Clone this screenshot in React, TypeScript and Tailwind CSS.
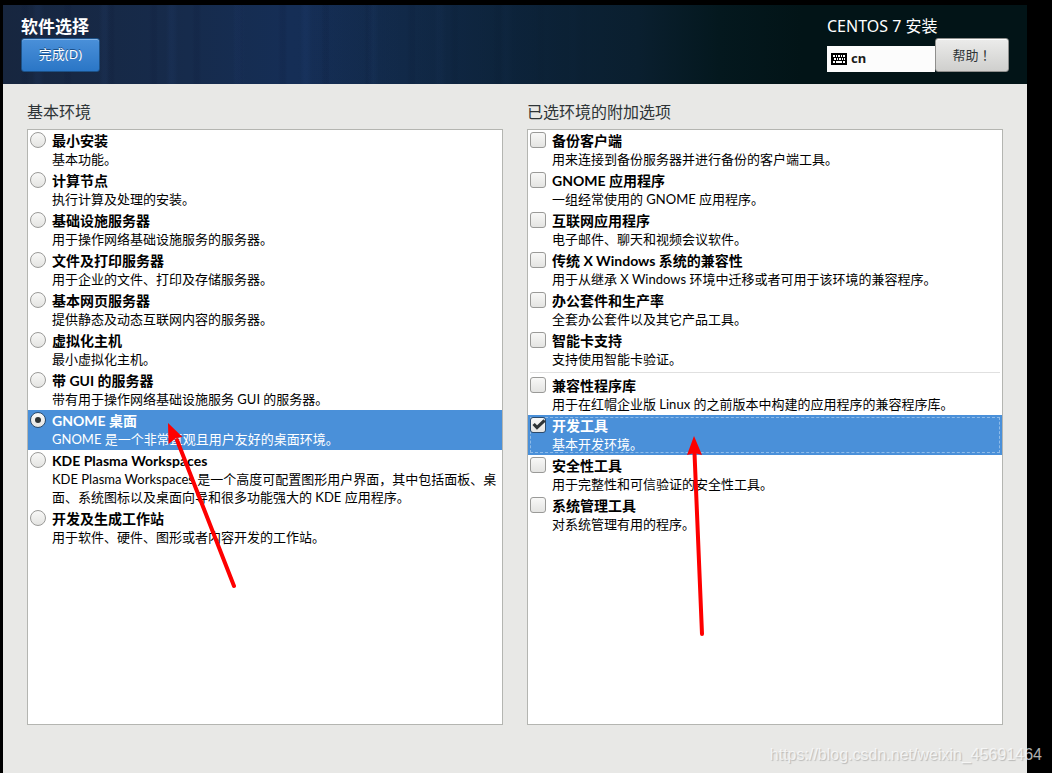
import React, { useState } from 'react';

interface Option {
  id: string;
  title: string;
  description: string;
}

const environments: Option[] = [
  { id: 'minimal', title: '最小安装', description: '基本功能。' },
  { id: 'compute', title: '计算节点', description: '执行计算及处理的安装。' },
  { id: 'infra', title: '基础设施服务器', description: '用于操作网络基础设施服务的服务器。' },
  { id: 'file', title: '文件及打印服务器', description: '用于企业的文件、打印及存储服务器。' },
  { id: 'web', title: '基本网页服务器', description: '提供静态及动态互联网内容的服务器。' },
  { id: 'virt', title: '虚拟化主机', description: '最小虚拟化主机。' },
  { id: 'gui', title: '带 GUI 的服务器', description: '带有用于操作网络基础设施服务 GUI 的服务器。' },
  { id: 'gnome', title: 'GNOME 桌面', description: 'GNOME 是一个非常直观且用户友好的桌面环境。' },
  {
    id: 'kde',
    title: 'KDE Plasma Workspaces',
    description: 'KDE Plasma Workspaces 是一个高度可配置图形用户界面，其中包括面板、桌面、系统图标以及桌面向导和很多功能强大的 KDE 应用程序。',
  },
  { id: 'dev', title: '开发及生成工作站', description: '用于软件、硬件、图形或者内容开发的工作站。' },
];

const environmentAddons: Option[] = [
  { id: 'backup', title: '备份客户端', description: '用来连接到备份服务器并进行备份的客户端工具。' },
  { id: 'gnome-apps', title: 'GNOME 应用程序', description: '一组经常使用的 GNOME 应用程序。' },
  { id: 'internet-apps', title: '互联网应用程序', description: '电子邮件、聊天和视频会议软件。' },
  { id: 'legacy-x', title: '传统 X Windows 系统的兼容性', description: '用于从继承 X Windows 环境中迁移或者可用于该环境的兼容程序。' },
  { id: 'office', title: '办公套件和生产率', description: '全套办公套件以及其它产品工具。' },
  { id: 'smart-card', title: '智能卡支持', description: '支持使用智能卡验证。' },
];

const commonAddons: Option[] = [
  { id: 'compat', title: '兼容性程序库', description: '用于在红帽企业版 Linux 的之前版本中构建的应用程序的兼容程序库。' },
  { id: 'devtools', title: '开发工具', description: '基本开发环境。' },
  { id: 'security', title: '安全性工具', description: '用于完整性和可信验证的安全性工具。' },
  { id: 'admin', title: '系统管理工具', description: '对系统管理有用的程序。' },
];

interface OptionRowProps {
  option: Option;
  type: 'radio' | 'checkbox';
  checked: boolean;
  focused?: boolean;
  onChange: () => void;
}

function OptionRow({ option, type, checked, focused, onChange }: OptionRowProps) {
  return (
    <label
      className={`flex gap-1.5 px-0.5 py-0.5 ${checked ? 'bg-[#4a90d9] text-white' : 'text-black'} ${
        focused ? 'outline-1 outline-dashed -outline-offset-3 outline-[#8fbbe8]' : ''
      }`}
    >
      <span className="relative size-4 shrink-0">
        <input
          type={type}
          name={type === 'radio' ? 'environment' : option.id}
          checked={checked}
          onChange={onChange}
          className={`block size-4 appearance-none border bg-linear-to-b from-[#f8f8f7] to-[#e4e4e2] outline-none ${
            type === 'radio' ? 'rounded-full' : 'rounded-[3px]'
          } ${checked ? 'border-[#2b4a6b]' : 'border-[#9a9a98]'}`}
        />
        {checked && type === 'radio' && (
          <span className="pointer-events-none absolute inset-[5px] rounded-full bg-[#2e3436]" />
        )}
        {checked && type === 'checkbox' && (
          <svg viewBox="0 0 16 16" className="pointer-events-none absolute inset-0 size-4" fill="none">
            <path d="M3.6 7 L7 10.6 L14.6 3.4" stroke="#2e3436" strokeWidth="3.2" />
          </svg>
        )}
      </span>
      <span className="flex flex-col font-['Lato','Noto_Sans_CJK_SC',sans-serif]">
        <span className="text-[14px] leading-[18px] font-bold">{option.title}</span>
        <span className="text-[13px] leading-[18px]">{option.description}</span>
      </span>
    </label>
  );
}

function KeyboardIcon() {
  return (
    <svg viewBox="0 0 16 12" className="h-3 w-4" shapeRendering="crispEdges">
      <rect width="16" height="12" rx="1" fill="#000" />
      <path
        d="M2 2h2v2h-2z M5 2h1v2h-1z M7 2h2v2h-2z M10 2h1v2h-1z M12 2h2v2h-2z M3 5h2v2h-2z M6 5h1v2h-1z M8 5h2v2h-2z M11 5h1v2h-1z M13 5h1v2h-1z M2 8h2v2h-2z M5 8h6v2h-6z M12 8h2v2h-2z"
        fill="#fff"
      />
    </svg>
  );
}

function Header() {
  return (
    <header className="flex justify-between bg-[linear-gradient(90deg,transparent_30%,#0a1f2f_62%,#04181e_70%,#021417_78%),repeating-linear-gradient(90deg,transparent_0_29px,rgba(50,90,160,0.08)_33px_36px,transparent_41px_67px),repeating-linear-gradient(90deg,transparent_0_17px,rgba(10,20,50,0.12)_20px_24px,transparent_26px_43px),linear-gradient(90deg,#17263f_0%,#162b4c_18%,#152e56_28%,#142d52_40%,#10284a_55%)] px-[18px] pt-2.5 pb-3 text-white">
      <div>
        <h1 className="text-[17px] leading-[23px] font-bold">软件选择</h1>
        <button
          type="button"
          className="h-[34px] w-[79px] rounded-[3px] border border-[#1c5187] bg-linear-to-b from-[#4a90d9] to-[#2a76c6] text-[13px] inset-shadow-[0_1px_0_#86b6e8] text-shadow-[0_-1px_0_#1d4f86]"
        >
          完成(D)
        </button>
      </div>
      <div>
        <div className="text-[16px] leading-[23px]">CENTOS 7 安装</div>
        <div className="flex items-end">
          <button
            type="button"
            className="flex h-[26px] w-[108px] items-center gap-1 bg-[#fcfcfc] px-1 text-[13px] font-bold text-[#1a1a1a]"
          >
            <KeyboardIcon />
            cn
          </button>
          <button
            type="button"
            className="h-[34px] w-[74px] rounded-[3px] border border-[#8f8f8d] bg-linear-to-b from-[#ececeb] to-[#cfcfcd] font-['Noto_Sans_CJK_TC',sans-serif] text-[13px] text-[#2e3436] inset-shadow-[0_1px_0_#ffffff]"
          >
            帮助！
          </button>
        </div>
      </div>
    </header>
  );
}

interface PanelProps {
  label: string;
  children: React.ReactNode;
}

function Panel({ label, children }: PanelProps) {
  return (
    <section className="flex min-w-0 flex-1 flex-col">
      <h2 className="pb-[5px] text-[16px] leading-6 text-[#2e3436]">{label}</h2>
      <div className="relative flex-1 border border-[#b4b5b1] bg-white">{children}</div>
    </section>
  );
}

export default function App() {
  const [environment, setEnvironment] = useState('gnome');
  const [addons, setAddons] = useState<string[]>(['devtools']);
  const [focused, setFocused] = useState('devtools');

  const toggleAddon = (id: string) => {
    setFocused(id);
    setAddons(addons.includes(id) ? addons.filter((a) => a !== id) : [...addons, id]);
  };

  const renderAddon = (option: Option) => (
    <OptionRow
      key={option.id}
      option={option}
      type="checkbox"
      checked={addons.includes(option.id)}
      focused={focused === option.id}
      onChange={() => toggleAddon(option.id)}
    />
  );

  return (
    <div className="relative flex min-h-screen flex-col bg-black pt-[5px] pr-[25px] pl-[3px] font-['Noto_Sans','Noto_Sans_CJK_SC',sans-serif]">
      <Header />
      <main className="flex flex-1 gap-6 bg-[#e8e8e6] px-6 pt-4 pb-12">
        <Panel label="基本环境">
          {environments.map((option) => (
            <OptionRow
              key={option.id}
              option={option}
              type="radio"
              checked={environment === option.id}
              onChange={() => setEnvironment(option.id)}
            />
          ))}
          <svg viewBox="0 0 80 170" className="pointer-events-none absolute top-[290px] left-[137px] h-[170px] w-20">
            <path d="M12 20 L69 166" stroke="#fe0000" strokeWidth="4" strokeLinecap="round" />
            <path d="M3 3 L17.5 17 L11 18 L3.5 24 Z" fill="#fe0000" />
          </svg>
        </Panel>
        <Panel label="已选环境的附加选项">
          {environmentAddons.map(renderAddon)}
          <hr className="mx-0.5 my-0.5 border-[#e0e0e0]" />
          {commonAddons.map(renderAddon)}
          <svg viewBox="0 0 30 210" className="pointer-events-none absolute top-[303px] left-[152px] h-[210px] w-[30px]">
            <path d="M14.5 20 L22 201" stroke="#fe0000" strokeWidth="4" strokeLinecap="round" />
            <path d="M14 3 L22 22 L14.5 20 L7 22 Z" fill="#fe0000" />
          </svg>
        </Panel>
      </main>
      <div className="pointer-events-none absolute right-2.5 bottom-1.5 font-['Liberation_Sans',sans-serif] text-[16px] leading-6 text-white/70 text-shadow-[1px_1px_1px_rgba(0,0,0,0.2)]">
        https://blog.csdn.net/weixin_45691464
      </div>
    </div>
  );
}
